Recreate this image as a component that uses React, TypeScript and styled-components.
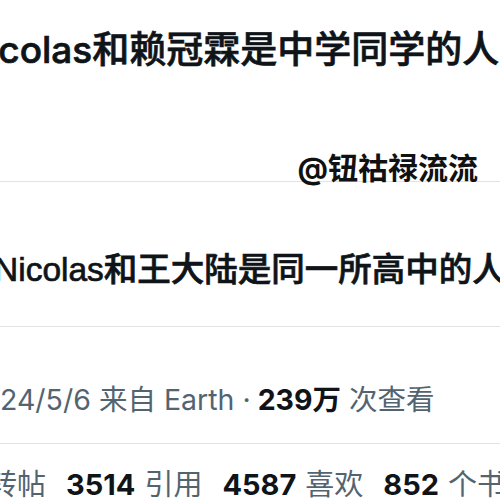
import styled, { createGlobalStyle } from "styled-components";

const GlobalStyle = createGlobalStyle`
  html, body {
    margin: 0;
    padding: 0;
    background: #ffffff;
  }
  body {
    font-family: Inter, "Noto Sans CJK SC", sans-serif;
    color: #0f1419;
  }
`;

const Page = styled.div`
  position: relative;
  width: 500px;
  height: 500px;
  overflow: hidden;
  background: #ffffff;
`;

const Section = styled.div<{ $height: number; $padTop: number }>`
  height: ${(p) => p.$height}px;
  padding-top: ${(p) => p.$padTop}px;
  box-sizing: border-box;
  border-bottom: 1px solid #e1e3e5;
  white-space: nowrap;
`;

const PostText = styled.div<{ $size: number; $shift: number; $narrow?: boolean }>`
  font-family: ${(p) =>
    p.$narrow
      ? `"Liberation Sans", "Noto Sans CJK SC", sans-serif`
      : `Inter, "Noto Sans CJK SC", sans-serif`};
  font-size: ${(p) => p.$size}px;
  font-weight: 500;
  line-height: 1.2;
  margin-left: ${(p) => p.$shift}px;
  color: #0f1419;
  -webkit-text-stroke: 0.7px #0f1419;
`;

const Watermark = styled.div`
  position: absolute;
  top: 150px;
  right: 22px;
  font-size: 30px;
  font-weight: 700;
  line-height: 1.2;
  color: #111111;
`;

const MetaRow = styled.div`
  font-size: 28.5px;
  line-height: 1.2;
  color: #536471;
`;

const Strong = styled.span<{ $lead?: number }>`
  font-weight: 700;
  color: #0f1419;
  margin-left: ${(p) => p.$lead ?? 0}px;
`;

const StatsRow = styled.div`
  display: flex;
  gap: 20px;
  font-size: 29px;
  line-height: 1.2;
  color: #536471;
  padding-top: 24px;
  margin-left: -12px;
  white-space: nowrap;
`;

const Stat = styled.span`
  display: flex;
  gap: 9px;
`;

const stats = [
  { num: "", label: "转帖" },
  { num: "3514", label: "引用" },
  { num: "4587", label: "喜欢" },
  { num: "852", label: "个书签" },
];

export default function App() {
  return (
    <Page>
      <GlobalStyle />
      <Section $height={182} $padTop={28}>
        <PostText $size={37} $shift={-39}>
          Nicolas和赖冠霖是中学同学的人
        </PostText>
      </Section>
      <Section $height={145} $padTop={68}>
        <PostText $size={33.5} $shift={-6} $narrow>
          Nicolas和王大陆是同一所高中的人
        </PostText>
      </Section>
      <Section $height={117} $padTop={56}>
        <MetaRow>
          24/5/6 来自 Earth ·<Strong $lead={7}>239万</Strong> 次查看
        </MetaRow>
      </Section>
      <StatsRow>
        {stats.map((s) => (
          <Stat key={s.label}>
            {s.num && <Strong>{s.num}</Strong>}
            <span>{s.label}</span>
          </Stat>
        ))}
      </StatsRow>
      <Watermark>@钮祜禄流流</Watermark>
    </Page>
  );
}
